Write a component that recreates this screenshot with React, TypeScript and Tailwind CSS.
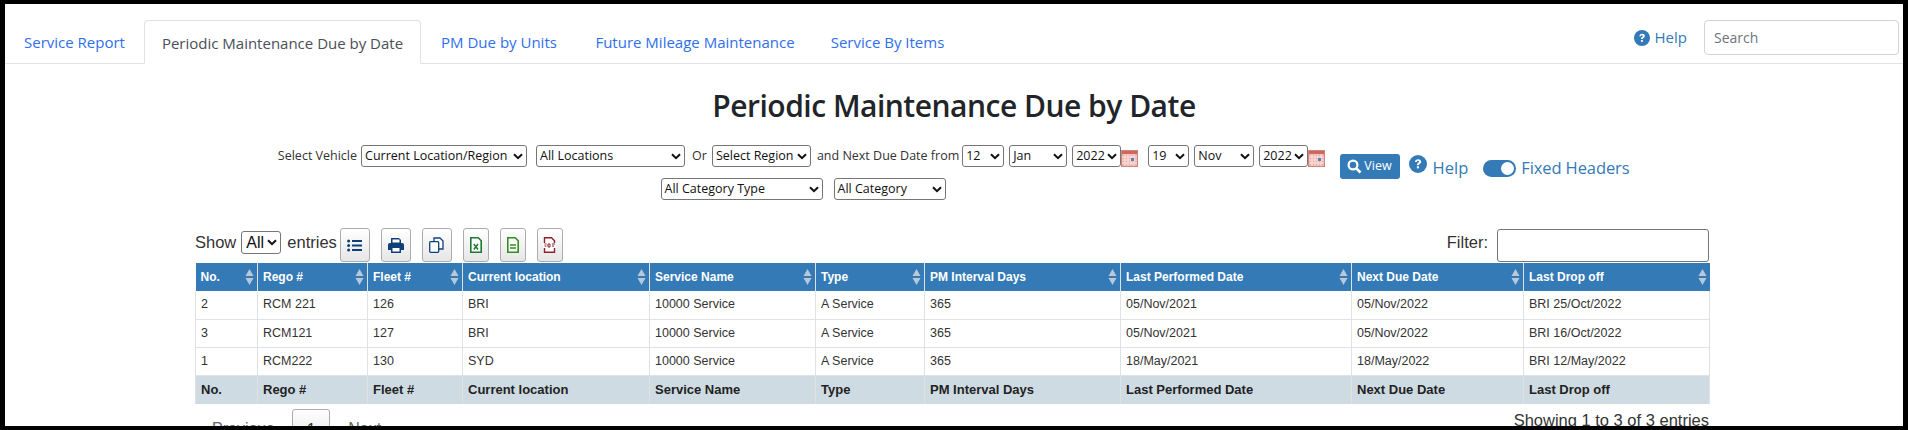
import React from "react";

const cols = [62, 110, 95, 187, 166, 109, 196, 231, 172, 186];
const heads = ["No.", "Rego #", "Fleet #", "Current location", "Service Name", "Type", "PM Interval Days", "Last Performed Date", "Next Due Date", "Last Drop off"];
const rows = [
  ["2", "RCM 221", "126", "BRI", "10000 Service", "A Service", "365", "05/Nov/2021", "05/Nov/2022", "BRI 25/Oct/2022"],
  ["3", "RCM121", "127", "BRI", "10000 Service", "A Service", "365", "05/Nov/2021", "05/Nov/2022", "BRI 16/Oct/2022"],
  ["1", "RCM222", "130", "SYD", "10000 Service", "A Service", "365", "18/May/2021", "18/May/2022", "BRI 12/May/2022"],
];
const tabs = ["Service Report", "Periodic Maintenance Due by Date", "PM Due by Units", "Future Mileage Maintenance", "Service By Items"];

function Sel({ w, label, className = "" }: { w: string; label: string; className?: string }) {
  return (
    <span className={`inline-flex h-[22px] items-center justify-between rounded-[3px] border border-[#767676] bg-white pl-[3px] pr-[3px] text-[12.5px] leading-none text-[#111] ${w} ${className}`}>
      <span className="whitespace-nowrap">{label}</span>
      <svg width="10" height="7" viewBox="0 0 10 7" className="shrink-0"><path d="M1 1.2 5 5.2 9 1.2" fill="none" stroke="#111" strokeWidth="2" /></svg>
    </span>
  );
}

function Cal() {
  return (
    <svg width="17" height="17" viewBox="0 0 17 17" className="mt-[5px] shrink-0">
      <rect x="0.5" y="0.5" width="16" height="16" fill="#eeb0a8" stroke="#c9877e" />
      <rect x="1" y="1" width="15" height="3" fill="#d0675c" />
      <path d="M1 7h15M1 10h15M1 13h15M4 4v12M7 4v12M10 4v12M13 4v12" stroke="#fbe6e2" strokeWidth="1" />
      <rect x="10" y="8" width="3" height="3" fill="#5a7fc0" />
    </svg>
  );
}

function Help({ cls, size }: { cls: string; size: number }) {
  return (
    <span className={`inline-flex items-center ${cls}`}>
      <svg width={size} height={size} viewBox="0 0 16 16">
        <circle cx="8" cy="8" r="8" fill="#337ab7" />
        <path d="M5.3 6.2C5.4 4.6 6.6 3.7 8.1 3.7c1.6 0 2.7.9 2.7 2.2 0 1-.6 1.5-1.3 2-.6.4-.8.6-.8 1.2H7c0-1 .3-1.5 1-2 .6-.4.9-.7.9-1.1 0-.5-.4-.8-.9-.8-.6 0-1 .4-1.1 1z" fill="#fff" />
        <rect x="7" y="10" width="1.8" height="1.9" fill="#fff" />
      </svg>
    </span>
  );
}

function ToolBtn({ w, children }: { w: string; children: React.ReactNode }) {
  return (
    <span className={`flex h-[34px] items-center justify-center rounded-[3px] border border-[#acacac] bg-gradient-to-b from-white to-[#e6e6e6] ${w}`}>
      {children}
    </span>
  );
}

function Sort() {
  return (
    <svg width="9" height="18" viewBox="0 0 9 18" className="shrink-0">
      <path d="M4.5 1 8.5 8H.5z" fill="#b9c7d6" />
      <path d="M4.5 17 .5 10h8z" fill="#b9c7d6" />
    </svg>
  );
}

export default function App() {
  return (
    <div className="h-[430px] w-[1908px] overflow-hidden bg-black pt-[4px] pr-[5px] pb-[4px] pl-[5px]">
      <div className="h-[422px] overflow-hidden bg-white font-['Liberation_Sans',sans-serif]">
        <div className="flex h-[60px] items-end border-b border-[#dee2e6] font-['Open_Sans',sans-serif] text-[15px]">
          <div className="flex">
            {tabs.map((t, i) => (
              <span
                key={t}
                className={
                  i === 1
                    ? "-mb-px flex h-[44px] w-[277px] items-center justify-center rounded-t-[4px] border border-[#dee2e6] border-b-white bg-white pt-[2px] text-[#495057]"
                    : `flex h-[43px] items-center justify-center pt-[2px] text-[#2f6fed] ${i === 0 ? "w-[139px]" : i === 2 ? "w-[156px]" : i === 3 ? "w-[236px]" : "w-[149px]"}`
                }
              >
                {t}
              </span>
            ))}
          </div>
          <div className="ml-auto flex items-center pr-[4px] pb-[8px]">
            <Help cls="" size={16} />
            <span className="ml-[5px] text-[15px] text-[#337ab7]">Help</span>
            <span className="ml-[17px] flex h-[35px] w-[195px] items-center rounded-[4px] border border-[#ced4da] px-[9px] text-[14px] text-[#6c757d]">Search</span>
          </div>
        </div>

        <h1 className="mt-[21px] text-center font-['Open_Sans',sans-serif] text-[30px] leading-[42px] font-semibold tracking-[-0.5px] text-[#212529]">
          Periodic Maintenance Due by Date
        </h1>

        <div className="mt-[18px] flex h-[60px] justify-center pr-[5px] font-['Open_Sans',sans-serif] text-[#333]">
          <div className="flex w-[1056px] flex-col items-center gap-[11px] text-[12.5px]">
            <div className="flex items-start whitespace-nowrap leading-[22px]">
              <span>Select Vehicle</span>
              <Sel w="w-[166px] ml-[4px]" label="Current Location/Region" />
              <Sel w="w-[149px] ml-[9px]" label="All Locations" />
              <span className="ml-[7px]">Or</span>
              <Sel w="w-[99px] ml-[5px]" label="Select Region" />
              <span className="ml-[6px]">and Next Due Date from</span>
              <Sel w="w-[42px] ml-[3px]" label="12" />
              <Sel w="w-[58px] ml-[5px]" label="Jan" />
              <Sel w="w-[49px] ml-[5px]" label="2022" />
              <Cal />
              <Sel w="w-[41px] ml-[10px]" label="19" />
              <Sel w="w-[60px] ml-[5px]" label="Nov" />
              <Sel w="w-[49px] ml-[5px]" label="2022" />
              <Cal />
            </div>
            <div className="flex items-center pl-[3px]">
              <Sel w="w-[162px]" label="All Category Type" />
              <Sel w="w-[112px] ml-[11px]" label="All Category" />
            </div>
          </div>
          <div className="ml-[10px] flex h-[37px] items-start">
            <span className="mt-[9px] flex h-[25px] w-[60px] items-center justify-center gap-[2px] rounded-[3px] bg-[#337ab7] text-[12.5px] text-white">
              <svg width="15" height="15" viewBox="0 0 15 15"><circle cx="6" cy="6" r="4.4" fill="none" stroke="#fff" strokeWidth="2.2" /><path d="M9.3 9.3 13.5 13.5" stroke="#fff" strokeWidth="2.6" /></svg>
              View
            </span>
            <Help cls="ml-[9px] mt-[10px]" size={18} />
            <span className="mt-[11px] ml-[6px] text-[16.5px] leading-[24px] text-[#337ab7]">Help</span>
            <span className="mt-[15px] ml-[15px] flex h-[17px] w-[33px] items-center justify-end rounded-full bg-[#337ab7] p-[2px]">
              <span className="h-[13px] w-[13px] rounded-full bg-white" />
            </span>
            <span className="mt-[11px] ml-[5px] text-[16.5px] leading-[24px] tracking-[-0.1px] whitespace-nowrap text-[#337ab7]">Fixed Headers</span>
          </div>
        </div>

        <div className="ml-[190px] w-[1514px]">
          <div className="mt-[23px] flex h-[35px] items-start text-[16.5px] text-[#333]">
            <span className="mt-[4px] leading-[20px]">Show</span>
            <span className="mt-[3px] ml-[5px] flex h-[23px] w-[40px] items-center justify-between rounded-[3px] border border-[#767676] pr-[3px] pl-[4px] text-[16px] text-[#111]">
              All
              <svg width="10" height="7" viewBox="0 0 10 7"><path d="M1 1.2 5 5.2 9 1.2" fill="none" stroke="#111" strokeWidth="2" /></svg>
            </span>
            <span className="mt-[4px] ml-[6px] leading-[20px]">entries</span>
            <div className="ml-[3px] flex gap-[11px]">
              <ToolBtn w="w-[30px]">
                <svg width="15" height="13" viewBox="0 0 15 13" fill="#0f3f7a"><circle cx="1.6" cy="2" r="1.5" /><circle cx="1.6" cy="6.5" r="1.5" /><circle cx="1.6" cy="11" r="1.5" /><rect x="5" y="1" width="10" height="2" /><rect x="5" y="5.5" width="10" height="2" /><rect x="5" y="10" width="10" height="2" /></svg>
              </ToolBtn>
              <ToolBtn w="w-[30px]">
                <svg width="16" height="15" viewBox="0 0 16 15" fill="#0f3f7a"><path d="M3 0h8l2 2v3H3z" /><rect x="4.5" y="1.5" width="7" height="3" fill="#fff" /><path d="M2 5h12a2 2 0 0 1 2 2v5h-3v3H3v-3H0V7a2 2 0 0 1 2-2z" /><rect x="4.5" y="10" width="7" height="3.5" fill="#fff" /></svg>
              </ToolBtn>
              <ToolBtn w="w-[30px]">
                <svg width="15" height="16" viewBox="0 0 15 16" fill="#fff" stroke="#0f3f7a" strokeWidth="1.3"><path d="M5 1h6l3 3v8H5z" /><rect x="0.7" y="4.7" width="9" height="10.6" rx="1" /></svg>
              </ToolBtn>
              <ToolBtn w="w-[26px]">
                <svg width="12" height="16" viewBox="0 0 12 16"><path d="M.8.8h7.4l3 3v11.4H.8z" fill="#fff" stroke="#1c7a33" strokeWidth="1.6" /><path d="M3.8 7 8 12.5M8 7 3.8 12.5" stroke="#1c7a33" strokeWidth="1.5" /></svg>
              </ToolBtn>
              <ToolBtn w="w-[26px]">
                <svg width="12" height="16" viewBox="0 0 12 16"><path d="M.8.8h7.4l3 3v11.4H.8z" fill="#fff" stroke="#2f8f1f" strokeWidth="1.6" /><path d="M3 8h6M3 11h6" stroke="#2f8f1f" strokeWidth="1.6" /></svg>
              </ToolBtn>
              <ToolBtn w="w-[26px]">
                <svg width="13" height="16" viewBox="0 0 13 16"><path d="M1.5.7h7l3 3v11.6h-10z" fill="#fff" stroke="#8f1f2a" strokeWidth="1.4" /><rect x="0" y="6" width="13" height="5" fill="#fff" /><path d="M1.5 7h2M1.5 9h2M5 7h2v3H5zM9 7h3M9 9h2" stroke="#8f1f2a" strokeWidth="1" fill="none" /></svg>
              </ToolBtn>
            </div>
            <span className="mt-[4px] ml-auto leading-[20px]">Filter:</span>
            <span className="mt-[1px] ml-[9px] h-[33px] w-[212px] rounded-[3px] border border-[#767676] bg-white" />
          </div>

          <table className="w-[1514px] table-fixed border-collapse text-[12.5px] text-[#333]">
            <colgroup>
              {cols.map((c, i) => (
                <col key={i} style={{ width: c }} />
              ))}
            </colgroup>
            <thead>
              <tr className="h-[28px] bg-[#337ab7] text-white">
                {heads.map((h) => (
                  <th key={h} className="border-x border-[#dee2e6] px-[5px] py-0 text-left text-[12px] font-bold first:border-l-0 last:border-r-0">
                    <span className="flex items-center justify-between">
                      {h}
                      <span className="-mr-[2px] flex"><Sort /></span>
                    </span>
                  </th>
                ))}
              </tr>
            </thead>
            <tbody>
              {rows.map((r) => (
                <tr key={r[0]} className="h-[28px] border-b border-[#dee2e6]">
                  {r.map((c, i) => (
                    <td key={i} className="border-x border-[#dee2e6] px-[5px] py-0">{c}</td>
                  ))}
                </tr>
              ))}
            </tbody>
            <tfoot>
              <tr className="h-[29px] bg-[#cfdbe3]">
                {heads.map((h) => (
                  <td key={h} className="border-x border-[#dee2e6] px-[5px] py-0 text-[13px] font-bold text-[#222]">{h}</td>
                ))}
              </tr>
            </tfoot>
          </table>

          <div className="flex items-start text-[16px]">
            <span className="mt-[13px] ml-[17px] text-[#666]">Previous</span>
            <span className="mt-[5px] ml-[18px] flex h-[34px] w-[38px] items-center justify-center rounded-[3px] border border-[#acacac] bg-gradient-to-b from-white to-[#e6e6e6] pt-[8px] text-[#333]">1</span>
            <span className="mt-[13px] ml-[18px] text-[#666]">Next</span>
            <span className="mt-[4px] ml-auto text-[16.5px] text-[#333]">Showing 1 to 3 of 3 entries</span>
          </div>
        </div>
      </div>
    </div>
  );
}
